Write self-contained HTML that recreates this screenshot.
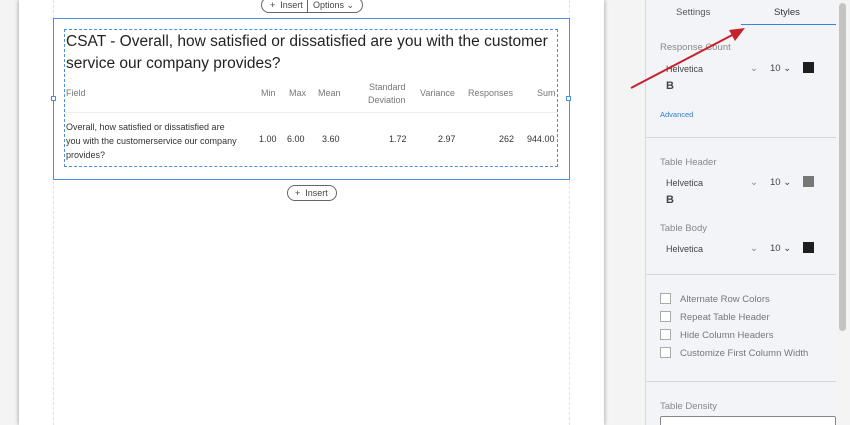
<!DOCTYPE html>
<html style="overflow:hidden;width:850px;height:425px"><head><style>
*{box-sizing:border-box;margin:0;padding:0}
body{width:850px;height:425px;overflow:hidden;background:#f4f4f4;font-family:"Liberation Sans",Arial,sans-serif;position:relative}
.page{position:absolute;left:19px;top:0;width:585px;height:425px;background:#fff;box-shadow:-1px 0 4px rgba(0,0,0,.2),1px 0 4px rgba(0,0,0,.2)}
.dl{position:absolute;top:0;height:425px;border-left:1px dashed #e2e2e2}
.box{position:absolute;left:53px;top:18px;width:517px;height:162px;border:1.5px solid #4a8fe0}
.inner{position:absolute;left:64px;top:29px;width:494px;height:138px;border:1px dashed #4a8fe0}
.h{position:absolute;left:66px;top:31px;font-size:15.5px;line-height:22px;color:#222;width:485px}
.t{position:absolute;font-size:9px;color:#777}
.b{position:absolute;font-size:9px;color:#333}
.pill{position:absolute;border:1px solid #666;border-radius:10px;height:16px;font-size:9px;color:#444;line-height:14px;background:#fff;padding:0 8px}
.handle{position:absolute;width:5px;height:5px;border:1px solid #4a8fe0;background:#fff}
.panel{position:absolute;left:645px;top:0;width:191px;height:425px;background:#f3f4f8;border-left:1px solid #d8d8d8;overflow:hidden}
.sb{position:absolute;left:836px;top:0;width:14px;height:425px;background:#f4f4f4}
.sb div{position:absolute;left:3px;top:3px;width:7px;height:328px;background:#c4c4c4;border-radius:4px}
.sep{position:absolute;left:0;width:191px;border-top:1px solid #d6d6d6}
.lbl{position:absolute;left:14px;font-size:9.5px;color:#888}
.font{position:absolute;left:20px;font-size:9px;color:#444}
.sw{position:absolute;width:11px;height:11px}
.chk{position:absolute;left:14px;width:11px;height:11px;border:1px solid #aaa;background:#fff}
.cl{position:absolute;left:34px;font-size:9.5px;color:#777}
</style></head><body>
<div class="page"></div>
<div class="dl" style="left:53px"></div>
<div class="dl" style="left:569px"></div>
<div class="pill" style="left:261px;top:-3px;width:102px;padding:0"><span style="position:absolute;left:8px">+&nbsp; Insert</span><span style="position:absolute;left:45px;top:0;height:14px;border-left:1px solid #666"></span><span style="position:absolute;left:51px">Options ⌄</span></div>
<div class="box"></div>
<div class="handle" style="left:51px;top:96px"></div>
<div class="handle" style="left:566px;top:96px"></div>
<div class="inner"></div>
<div class="h">CSAT - Overall, how satisfied or dissatisfied are you with the customer service our company provides?</div>
<div class="t" style="left:66px;top:88px">Field</div>
<div class="t" style="left:261px;top:88px">Min</div>
<div class="t" style="left:289px;top:88px">Max</div>
<div class="t" style="left:318px;top:88px">Mean</div>
<div class="t" style="left:368px;top:81px;text-align:right;line-height:13px">Standard<br>Deviation</div>
<div class="t" style="left:420px;top:88px">Variance</div>
<div class="t" style="left:468px;top:88px">Responses</div>
<div class="t" style="left:537px;top:88px">Sum</div>
<div style="position:absolute;left:65px;top:112px;width:492px;border-top:1px solid #eee"></div>
<div class="b" style="left:66px;top:120px;line-height:14px;width:190px;white-space:nowrap">Overall, how satisfied or dissatisfied are<br>you with the customerservice our company<br>provides?</div>
<div class="b" style="left:259px;top:134px">1.00</div>
<div class="b" style="left:287px;top:134px">6.00</div>
<div class="b" style="left:322px;top:134px">3.60</div>
<div class="b" style="left:389px;top:134px">1.72</div>
<div class="b" style="left:438px;top:134px">2.97</div>
<div class="b" style="left:499px;top:134px">262</div>
<div class="b" style="left:527px;top:134px">944.00</div>
<div class="pill" style="left:287px;top:185px;width:50px;padding:0 0 0 7px">+&nbsp; Insert</div>

<div class="panel">
<div style="position:absolute;left:30px;top:7px;font-size:9.5px;color:#555">Settings</div>
<div style="position:absolute;left:128px;top:7px;font-size:9.5px;color:#333">Styles</div>
<div style="position:absolute;left:95px;top:24px;width:96px;border-top:1px solid #3b82e0"></div>
<div class="lbl" style="top:42px">Response Count</div>
<div class="font" style="top:64px">Helvetica</div>
<div class="lbl" style="left:104px;top:63px;color:#888">⌄</div><div class="font" style="left:124px;top:63px;font-size:9.5px">10 ⌄</div>
<div class="sw" style="left:157px;top:62px;background:#1e1e1e"></div>
<div style="position:absolute;left:20px;top:80px;font-weight:bold;font-size:11px;color:#444">B</div>
<div style="position:absolute;left:14px;top:110px;font-size:7.5px;color:#2f7ed8">Advanced</div>
<div class="sep" style="top:137px"></div>
<div class="lbl" style="top:157px">Table Header</div>
<div class="font" style="top:178px">Helvetica</div>
<div class="lbl" style="left:104px;top:177px">⌄</div><div class="font" style="left:124px;top:177px;font-size:9.5px">10 ⌄</div>
<div class="sw" style="left:157px;top:176px;background:#777"></div>
<div style="position:absolute;left:20px;top:194px;font-weight:bold;font-size:11px;color:#444">B</div>
<div class="lbl" style="top:223px">Table Body</div>
<div class="font" style="top:244px">Helvetica</div>
<div class="lbl" style="left:104px;top:243px">⌄</div><div class="font" style="left:124px;top:243px;font-size:9.5px">10 ⌄</div>
<div class="sw" style="left:157px;top:242px;background:#1e1e1e"></div>
<div class="sep" style="top:274px"></div>
<div class="chk" style="top:293px"></div><div class="cl" style="top:294px">Alternate Row Colors</div>
<div class="chk" style="top:311px"></div><div class="cl" style="top:312px">Repeat Table Header</div>
<div class="chk" style="top:329px"></div><div class="cl" style="top:330px">Hide Column Headers</div>
<div class="chk" style="top:347px"></div><div class="cl" style="top:348px">Customize First Column Width</div>
<div class="sep" style="top:381px"></div>
<div class="lbl" style="top:401px">Table Density</div>
<div style="position:absolute;left:14px;top:416px;width:176px;height:20px;border:1px solid #888;border-radius:2px;background:#fff"></div>
</div>
<div class="sb"><div></div></div>
<svg style="position:absolute;left:0;top:0" width="850" height="425"><line x1="631" y1="88" x2="738" y2="32" stroke="#c8202c" stroke-width="2"/><polygon points="745,28 729,30 735,41" fill="#c8202c"/></svg>
</body></html>
